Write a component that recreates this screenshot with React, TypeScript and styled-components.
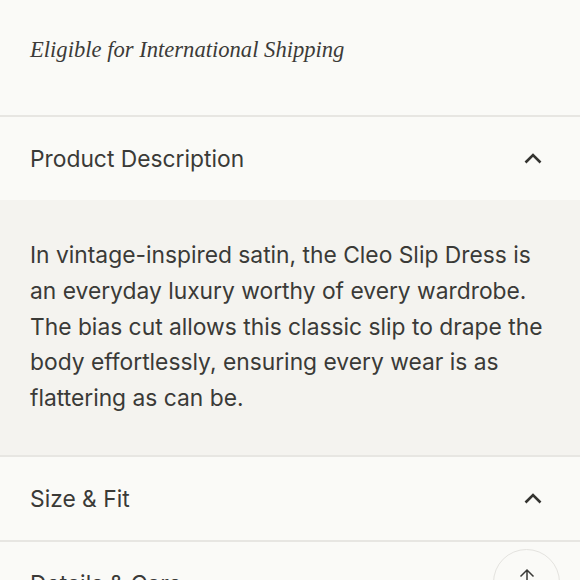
import React from "react";
import styled, { createGlobalStyle } from "styled-components";

const Global = createGlobalStyle`
  html, body { margin: 0; padding: 0; background: #fafaf7; overflow: hidden; }
  * { box-sizing: border-box; }
`;

const Page = styled.div`
  width: 580px;
  height: 580px;
  overflow: hidden;
  position: relative;
  background: #fafaf7;
  color: #3a3a37;
  font-family: Inter, "Liberation Sans", sans-serif;
`;

const Shipping = styled.div`
  height: 117px;
  display: flex;
  align-items: center;
  padding: 0 30px 16px;
  border-bottom: 2px solid #e7e6e2;
  font-family: "Liberation Serif", serif;
  font-style: italic;
  font-size: 22.6px;
  color: #3c3b38;
`;

const Section = styled.section`
  border-bottom: 2px solid #e7e6e2;
`;

const Header = styled.button`
  all: unset;
  box-sizing: border-box;
  width: 100%;
  height: 83px;
  display: flex;
  align-items: center;
  justify-content: space-between;
  padding: 0 38px 0 30px;
  font-family: Inter, "Liberation Sans", sans-serif;
  font-size: 22.8px;
  color: #3a3a37;
`;

const Panel = styled.div`
  background: #f4f3ef;
  padding: 37px 30px 39px;
  font-size: 22.8px;
  line-height: 35.8px;
  color: #3a3a37;
`;

const Chevron = () => (
  <svg width="18" height="11" viewBox="0 0 18 11" fill="none">
    <path d="M1.5 9.5L9 2L16.5 9.5" stroke="#333330" strokeWidth="2.6" />
  </svg>
);

const ScrollTop = styled.button`
  all: unset;
  position: absolute;
  left: 493px;
  top: 549px;
  width: 67px;
  height: 67px;
  border-radius: 50%;
  border: 1.5px solid #e4e3df;
  background: #fafaf7;
  display: flex;
  justify-content: center;
  padding-top: 18px;
  box-sizing: border-box;
`;

const items = [
  {
    title: "Product Description",
    body: "In vintage-inspired satin, the Cleo Slip Dress is an everyday luxury worthy of every wardrobe. The bias cut allows this classic slip to drape the body effortlessly, ensuring every wear is as flattering as can be.",
  },
  { title: "Size & Fit" },
  { title: "Details & Care" },
];

export default function App() {
  return (
    <Page>
      <Global />
      <Shipping>Eligible for International Shipping</Shipping>
      {items.map((it) => (
        <Section key={it.title}>
          <Header>
            {it.title}
            {it.title !== "Details & Care" && <Chevron />}
          </Header>
          {it.body && <Panel>{it.body}</Panel>}
        </Section>
      ))}
      <ScrollTop aria-label="Back to top">
        <svg width="16" height="20" viewBox="0 0 16 20" fill="none">
          <path d="M8 19V2M1.5 8.5L8 2L14.5 8.5" stroke="#3a3a37" strokeWidth="1.5" />
        </svg>
      </ScrollTop>
    </Page>
  );
}
